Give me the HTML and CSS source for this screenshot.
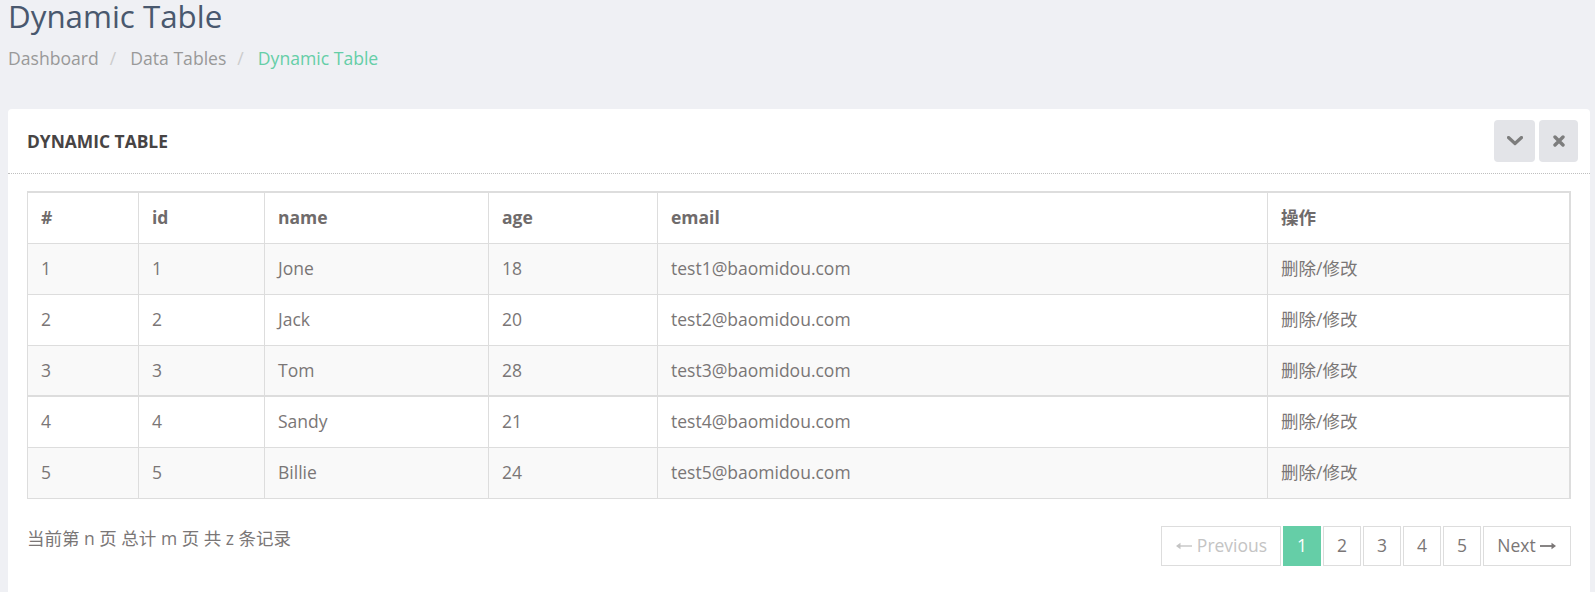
FILE: index.html
```html
<!DOCTYPE html>
<html lang="zh">
<head>
<meta charset="utf-8">
<title>Dynamic Table</title>
<link rel="stylesheet" href="styles.css">
</head>
<body>
<div class="wrapper">
  <div class="page-heading">
    <h3 class="title">Dynamic Table</h3>
    <ul class="breadcrumb">
      <li><a class="crumb">Dashboard</a></li>
      <li class="sep">/</li>
      <li><a class="crumb">Data Tables</a></li>
      <li class="sep">/</li>
      <li class="active-crumb">Dynamic Table</li>
    </ul>
  </div>

  <section class="panel">
    <header class="panel-heading">
      <span class="heading-text">DYNAMIC TABLE</span>
      <span class="tools">
        <a class="tool" href="#" aria-label="collapse">
          <svg width="16" height="10" viewBox="0 0 16 10"><path d="M1.5 1.5 L8 7.5 L14.5 1.5" fill="none" stroke="#7d7d7d" stroke-width="3.2" stroke-linecap="round" stroke-linejoin="round"/></svg>
        </a>
        <a class="tool tool-close" href="#" aria-label="close">
          <svg width="12" height="12" viewBox="0 0 12 12"><path d="M2 2 L10 10 M10 2 L2 10" fill="none" stroke="#7d7d7d" stroke-width="3.4" stroke-linecap="round"/></svg>
        </a>
      </span>
    </header>
    <div class="panel-body">
      <table class="data-table">
        <colgroup>
          <col class="c1"><col class="c2"><col class="c3"><col class="c4"><col class="c5"><col class="c6">
        </colgroup>
        <thead>
          <tr><th>#</th><th>id</th><th>name</th><th>age</th><th>email</th><th>操作</th></tr>
        </thead>
        <tbody>
          <tr class="odd"><td>1</td><td>1</td><td>Jone</td><td>18</td><td>test1@baomidou.com</td><td>删除/修改</td></tr>
          <tr><td>2</td><td>2</td><td>Jack</td><td>20</td><td>test2@baomidou.com</td><td>删除/修改</td></tr>
          <tr class="odd"><td>3</td><td>3</td><td>Tom</td><td>28</td><td>test3@baomidou.com</td><td>删除/修改</td></tr>
          <tr class="split"><td>4</td><td>4</td><td>Sandy</td><td>21</td><td>test4@baomidou.com</td><td>删除/修改</td></tr>
          <tr class="odd"><td>5</td><td>5</td><td>Billie</td><td>24</td><td>test5@baomidou.com</td><td>删除/修改</td></tr>
        </tbody>
      </table>
      <div class="table-footer">
        <div class="info">当前第 n 页 总计 m 页 共 z 条记录</div>
        <ul class="pagination">
          <li class="page-item disabled wide-prev"><svg class="arrow" width="18" height="10" viewBox="0 0 18 10"><path d="M17 5 H4" stroke="currentColor" stroke-width="1.4"/><path d="M1 5 L5.5 1.8 V8.2 Z" fill="currentColor"/></svg>Previous</li>
          <li class="page-item current">1</li>
          <li class="page-item">2</li>
          <li class="page-item">3</li>
          <li class="page-item">4</li>
          <li class="page-item">5</li>
          <li class="page-item wide-next">Next<svg class="arrow" width="18" height="10" viewBox="0 0 18 10"><path d="M1 5 H14" stroke="currentColor" stroke-width="1.8"/><path d="M17 5 L12.5 1.8 V8.2 Z" fill="currentColor"/></svg></li>
        </ul>
      </div>
    </div>
  </section>
</div>
</body>
</html>
```

FILE: styles.css
```css
* { box-sizing: border-box; }

html, body {
  margin: 0;
  padding: 0;
  background: #eff0f4;
}

body {
  font-family: "Open Sans", "Noto Sans CJK SC", sans-serif;
  color: #7a7676;
  font-size: 17.5px;
}

.wrapper {
  padding: 0 5px 0 8px;
}

.page-heading {
  height: 109px;
}

.title {
  margin: 0;
  font-size: 31.3px;
  font-weight: 400;
  line-height: 32px;
  color: #49586e;
}

.breadcrumb {
  list-style: none;
  margin: 14px 0 0;
  padding: 0;
  display: flex;
  font-size: 17.6px;
  line-height: 24px;
  color: #a3a3a3;
}

.crumb { color: #999; }

.sep {
  color: #ccc;
  margin: 0 14px 0 11px;
}

.active-crumb { color: #65cea7; }

.panel {
  background: #fff;
  border-radius: 4px;
  min-height: 600px;
}

.panel-heading {
  height: 65px;
  display: flex;
  align-items: center;
  justify-content: space-between;
  padding: 0 12px 0 19px;
  border-bottom: 1px dotted rgba(0, 0, 0, 0.25);
}

.heading-text {
  font-size: 17.4px;
  font-weight: 700;
  color: #474444;
}

.tools {
  display: flex;
  gap: 4px;
}

.tool {
  width: 41px;
  height: 42px;
  background: #e3e4e8;
  border-radius: 4px;
  display: flex;
  align-items: center;
  justify-content: center;
}

.tool-close { width: 39px; }

.panel-body {
  padding: 17px 19px 20px;
}

.data-table {
  width: 100%;
  border-collapse: collapse;
  table-layout: fixed;
  border-top: 2px solid #ddd;
  border-right: 2px solid #ddd;
  border-left: 1px solid #ddd;
  border-bottom: 1px solid #ddd;
}

.c1 { width: 111px; }
.c2 { width: 126px; }
.c3 { width: 224px; }
.c4 { width: 169px; }
.c5 { width: 610px; }

.data-table th,
.data-table td {
  border: 1px solid #ddd;
  padding: 12px 13px;
  line-height: 25px;
  text-align: left;
  white-space: nowrap;
}

.data-table th {
  font-weight: 700;
  color: #6f6b6b;
  height: 51px;
}

.data-table td { height: 51px; }

.data-table tr.odd td { background: #f9f9f9; }

.data-table tr.split td { border-top: 2px solid #ddd; }

.table-footer {
  display: flex;
  justify-content: space-between;
  align-items: flex-start;
  margin-top: 27px;
}

.info {
  line-height: 25px;
  padding-top: 0;
  color: #7a7676;
}

.pagination {
  list-style: none;
  margin: 0;
  padding: 0;
  display: flex;
  gap: 2px;
}

.page-item {
  height: 40px;
  width: 38px;
  border: 1px solid #ddd;
  display: flex;
  align-items: center;
  justify-content: center;
  color: #7a7676;
  line-height: 1;
}

.page-item.current {
  background: #65cea7;
  border-color: #65cea7;
  color: #fff;
}

.page-item.disabled { color: #c4c4c4; }

.wide-prev { width: 120px; }
.wide-next { width: 88px; }

.arrow { flex: none; }
.wide-prev .arrow { margin-right: 4px; }
.wide-next .arrow { margin-left: 3px; }
```
